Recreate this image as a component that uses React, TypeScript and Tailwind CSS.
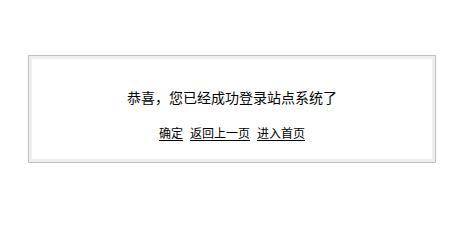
const links = ["确定", "返回上一页", "进入首页"];

export default function App() {
  return (
    <div className="min-h-[217px] w-full bg-white pt-[55px] font-['Noto_Sans_CJK_SC','Noto_Sans',sans-serif] text-black">
      <div className="ml-[28px] w-[408px] border border-[#c0c0c0]">
        <div className="flex flex-col items-center border-[3px] border-[#eeeeee] bg-white pb-[18px] pt-[28px]">
          <p className="text-[14px] leading-[20px]">恭喜，您已经成功登录站点系统了</p>
          <div className="mt-[18px] flex gap-[7px] text-[12px] leading-[16px]">
            {links.map((label) => (
              <a key={label} href="#" className="text-black underline underline-offset-[2px]">
                {label}
              </a>
            ))}
          </div>
        </div>
      </div>
    </div>
  );
}
